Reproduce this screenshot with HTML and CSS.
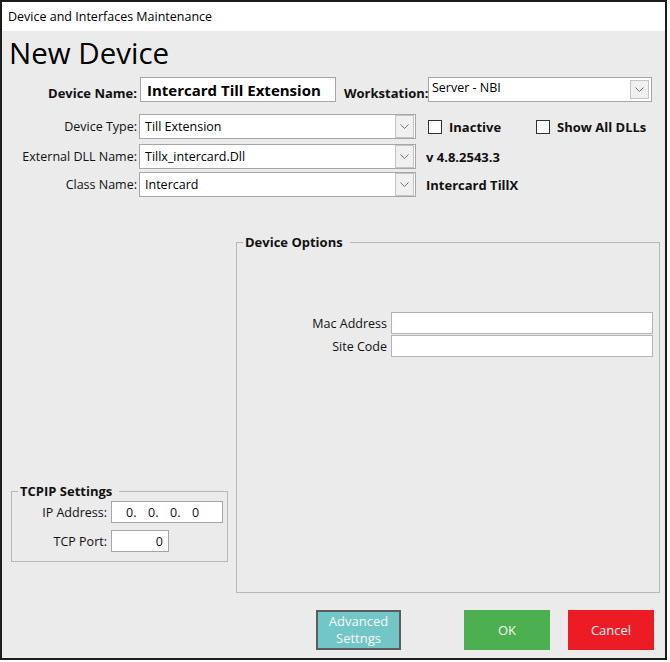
FILE: index.html
```html
<!DOCTYPE html>
<html>
<head>
<meta charset="utf-8">
<title>Device and Interfaces Maintenance</title>
<link rel="stylesheet" href="styles.css">
</head>
<body>
<div class="window">
  <div class="titlebar">Device and Interfaces Maintenance</div>
  <h1 class="heading">New Device</h1>

  <div class="row row-name">
    <span class="lbl-main bold">Device Name:</span>
    <div class="textbox name-box">Intercard Till Extension</div>
    <span class="ws-lbl bold">Workstation:</span>
    <div class="combo ws-combo">
      <span class="combo-text">Server - NBI</span>
      <span class="drop drop-small"><svg width="9" height="5" viewBox="0 0 9 5"><path d="M0.5 0.5 L4.5 4.5 L8.5 0.5" fill="none" stroke="#707070" stroke-width="1"/></svg></span>
    </div>
  </div>

  <div class="row row-type">
    <span class="lbl-main">Device Type:</span>
    <div class="combo main-combo">
      <span class="combo-text">Till Extension</span>
      <span class="drop"><svg width="9" height="5" viewBox="0 0 9 5"><path d="M0.5 0.5 L4.5 4.5 L8.5 0.5" fill="none" stroke="#707070" stroke-width="1"/></svg></span>
    </div>
    <div class="side">
      <span class="check check-first"><span class="box"></span>Inactive</span>
      <span class="check"><span class="box"></span>Show All DLLs</span>
    </div>
  </div>

  <div class="row row-dll">
    <span class="lbl-main">External DLL Name:</span>
    <div class="combo main-combo">
      <span class="combo-text">Tillx_intercard.Dll</span>
      <span class="drop"><svg width="9" height="5" viewBox="0 0 9 5"><path d="M0.5 0.5 L4.5 4.5 L8.5 0.5" fill="none" stroke="#707070" stroke-width="1"/></svg></span>
    </div>
    <div class="side">v 4.8.2543.3</div>
  </div>

  <div class="row row-class">
    <span class="lbl-main">Class Name:</span>
    <div class="combo main-combo">
      <span class="combo-text">Intercard</span>
      <span class="drop"><svg width="9" height="5" viewBox="0 0 9 5"><path d="M0.5 0.5 L4.5 4.5 L8.5 0.5" fill="none" stroke="#707070" stroke-width="1"/></svg></span>
    </div>
    <div class="side">Intercard TillX</div>
  </div>

  <div class="middle">
    <div class="left-col">
      <div class="group tcpip">
        <div class="group-title">TCPIP Settings</div>
        <div class="tcp-rows">
          <div class="field-row">
            <span class="tcp-lbl">IP Address:</span>
            <div class="textbox ip-box"><span>0.</span><span>0.</span><span>0.</span><span>0</span></div>
          </div>
          <div class="field-row tcp-port">
            <span class="tcp-lbl">TCP Port:</span>
            <div class="textbox port-box">0</div>
          </div>
        </div>
      </div>
    </div>
    <div class="group options">
      <div class="group-title">Device Options</div>
      <div class="opt-rows">
        <div class="field-row">
          <span class="opt-lbl">Mac Address</span>
          <div class="textbox opt-box"></div>
        </div>
        <div class="field-row opt-second">
          <span class="opt-lbl">Site Code</span>
          <div class="textbox opt-box"></div>
        </div>
      </div>
    </div>
  </div>

  <div class="buttons">
    <div class="btn btn-adv">Advanced<br>Settngs</div>
    <div class="btn btn-ok">OK</div>
    <div class="btn btn-cancel">Cancel</div>
  </div>
</div>
</body>
</html>
```
FILE: styles.css
```css
* { box-sizing: border-box; }
html, body { margin: 0; padding: 0; background: #ffffff; }
body {
  font-family: "Open Sans", "Noto Sans", sans-serif;
  color: #111;
  font-size: 12.5px;
}
.bold { font-weight: 700; font-size: 13px; }

.window {
  width: 667px;
  height: 660px;
  border: 2px solid #1c1c1c;
  background: #ebebeb;
  display: flex;
  flex-direction: column;
}
.titlebar {
  height: 29px;
  flex: none;
  background: #ffffff;
  font-size: 12.5px;
  line-height: 29px;
  padding-left: 6px;
  color: #000;
}
.heading {
  font-weight: 400;
  font-size: 29.5px;
  line-height: 36px;
  margin: 4px 0 0 7px;
  color: #000;
}

.row { display: flex; height: 25px; align-items: center; flex: none; }
.row-name { margin-top: 6px; align-items: flex-end; }
.row-type { margin-top: 12px; }
.row-dll { margin-top: 5px; }
.row-class { margin-top: 3px; }

.lbl-main { width: 135px; text-align: right; line-height: 16px; }
.row-name .lbl-main { margin-bottom: 1px; }

.textbox {
  background: #ffffff;
  border: 1px solid #a6a6a6;
  display: flex;
  align-items: center;
}
.name-box {
  margin-left: 3px;
  width: 196px;
  height: 25px;
  padding-left: 6px;
  font-weight: 700;
  font-size: 15px;
  color: #000;
}
.ws-lbl {
  width: 84px;
  margin-left: 8px;
  padding-right: 2px;
  text-align: right;
  line-height: 16px;
  margin-bottom: 1px;
}

.combo {
  background: #ffffff;
  border: 1px solid #a6a6a6;
  height: 25px;
  display: flex;
  align-items: center;
  justify-content: space-between;
}
.combo-text { padding-left: 5px; color: #000; }
.ws-combo { width: 224px; align-items: flex-start; }
.ws-combo .combo-text { padding-left: 3px; padding-top: 1px; }
.main-combo { margin-left: 2px; width: 277px; padding-right: 1px; }

.drop {
  width: 19px;
  height: 23px;
  border: 1px solid #c4c4c4;
  background: #f0f0f0;
  display: flex;
  align-items: center;
  justify-content: center;
}
.drop-small { width: 19px; height: 19px; margin: 2px 2px 0 0; }

.side {
  margin-left: 10px;
  display: flex;
  align-items: center;
  font-weight: 700;
  font-size: 13px;
  color: #111;
}
.check { display: flex; align-items: center; }
.check-first { width: 108px; margin-left: 2px; }
.box {
  width: 14px;
  height: 14px;
  border: 1px solid #333;
  background: #fff;
  margin-right: 7px;
}

.middle { display: flex; height: 396px; flex: none; }
.left-col {
  width: 234px;
  display: flex;
  flex-direction: column;
  justify-content: flex-end;
  padding: 0 0 31px 9px;
}
.group {
  border: 1px solid #b7b7b7;
}
.group-title {
  display: table;
  margin: -9px 0 0 6px;
  padding: 0 7px 0 2px;
  background: #ebebeb;
  font-weight: 700;
  font-size: 13px;
  line-height: 16px;
  color: #111;
}
.tcpip { width: 217px; height: 71px; }
.options { margin-top: 45px; width: 424px; height: 351px; }

.field-row { display: flex; align-items: center; height: 22px; }
.tcp-rows { margin-top: 2px; }
.tcp-port { margin-top: 7px; }
.tcp-lbl { width: 95px; text-align: right; }
.ip-box { margin-left: 4px; width: 112px; height: 22px; padding-left: 14px; }
.ip-box span { width: 22px; }
.port-box { margin-left: 4px; width: 58px; height: 22px; justify-content: flex-end; padding-right: 5px; }

.opt-rows { margin-top: 62px; }
.opt-second { margin-top: 1px; }
.opt-lbl { width: 150px; text-align: right; }
.opt-box { margin-left: 4px; width: 262px; height: 22px; border-color: #b3b3b3; }

.buttons {
  display: flex;
  justify-content: flex-end;
  padding-right: 11px;
  margin-top: 17px;
  flex: none;
}
.btn {
  height: 40px;
  width: 86px;
  color: #f7f7f7;
  font-size: 13px;
  line-height: 17px;
  display: flex;
  align-items: center;
  justify-content: center;
  text-align: center;
}
.btn-adv { width: 85px; background: #72c6c7; border: 2px solid #5c5c5c; margin-right: 63px; }
.btn-ok { background: #4caf50; margin-right: 18px; }
.btn-cancel { background: #ed1c24; }
```
